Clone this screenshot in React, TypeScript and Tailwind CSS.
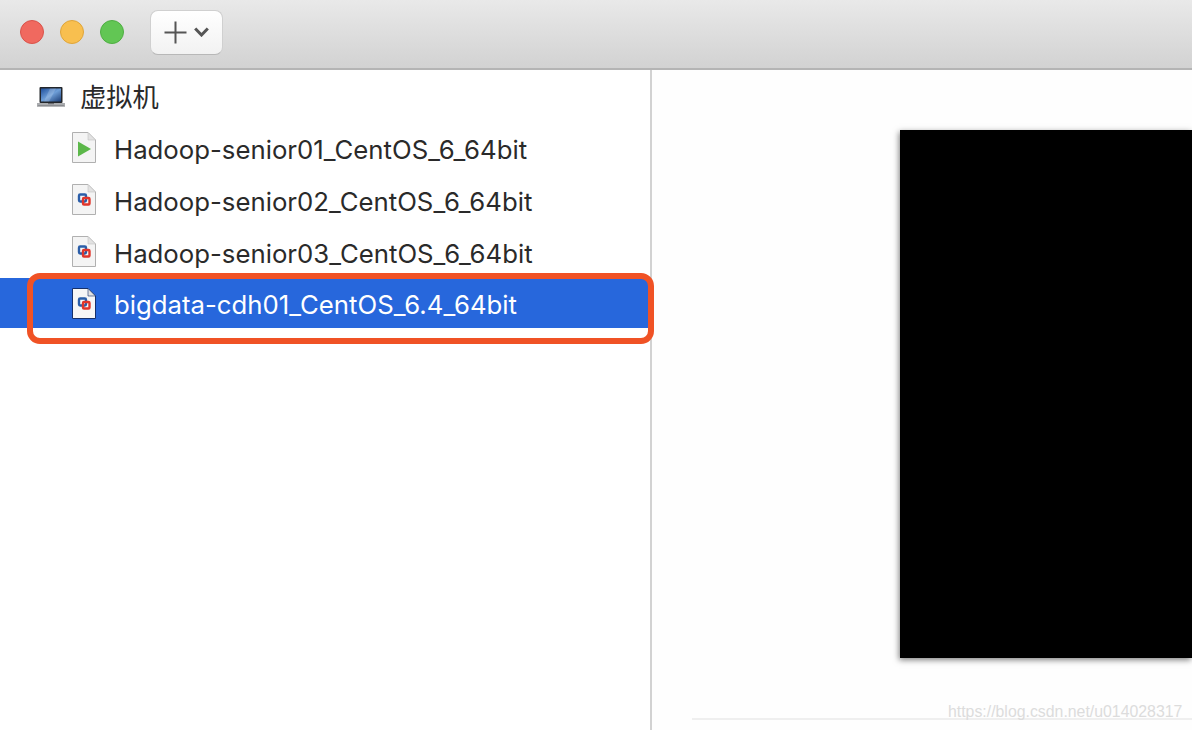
const rowText = "text-[25.75px] leading-none [font-family:Inter,'Noto_Sans_CJK_SC',sans-serif]";

function TrafficLight({ color, ring }: { color: string; ring: string }) {
  return <div className={`h-6 w-6 rounded-full border ${color} ${ring}`} />;
}

function LaptopIcon() {
  return (
    <svg width="30" height="22" viewBox="0 0 30 22" className="shrink-0">
      <defs>
        <linearGradient id="screen" x1="0" y1="0" x2="1" y2="1">
          <stop offset="0" stopColor="#1f4f9c" />
          <stop offset="0.5" stopColor="#6f9fd8" />
          <stop offset="1" stopColor="#1d3f78" />
        </linearGradient>
      </defs>
      <rect x="3.5" y="1" width="23" height="16" rx="1" fill="#23262b" />
      <rect x="5" y="2.5" width="20" height="13" fill="url(#screen)" />
      <path d="M14 2.5h6l-7 13H8z" fill="#fff" opacity="0.18" />
      <path d="M1 17h28v1.6c0 .9-.7 1.4-1.6 1.4H2.6C1.700 20 1 19.500 1 18.600z" fill="#a9abae" />
      <rect x="1" y="19.500" width="28" height="1" fill="#6f7175" />
      <rect x="12" y="17" width="6" height="1.200" fill="#6a6c70" />
    </svg>
  );
}

function DocShape({ selected }: { selected?: boolean }) {
  return (
    <>
      <path
        d="M0.500 0.500h15.500l7.500 7.500v22.500H0.500z"
        fill={selected ? "#f6f6f6" : "#f4f4f4"}
        stroke={selected ? "#16306b" : "#b0b0b0"}
        strokeWidth="1"
      />
      <path d="M16 0.500v7.500h7.500z" fill="#e2e2e2" stroke={selected ? "#16306b" : "#c4c4c4"} strokeWidth="0.600" />
    </>
  );
}

function PlayDocIcon() {
  return (
    <svg width="24" height="31" viewBox="0 0 24 31" className="mb-[3px] shrink-0">
      <DocShape />
      <path d="M6 9.500 19 17 6 24.500z" fill="#5cb84a" />
    </svg>
  );
}

function VmDocIcon({ selected }: { selected?: boolean }) {
  return (
    <svg width="24" height="31" viewBox="0 0 24 31" className={selected ? "shrink-0" : "mb-[3px] shrink-0"}>
      <DocShape selected={selected} />
      <rect x="7" y="10.500" width="7" height="7" rx="1.200" fill="none" stroke="#2a5da8" strokeWidth="2.400" />
      <rect x="11" y="14" width="6.500" height="6.500" rx="1" fill="none" stroke="#e0352b" strokeWidth="2.400" />
    </svg>
  );
}

const machines = [
  { name: "Hadoop-senior01_CentOS_6_64bit", running: true },
  { name: "Hadoop-senior02_CentOS_6_64bit", running: false },
  { name: "Hadoop-senior03_CentOS_6_64bit", running: false },
];

export default function App() {
  return (
    <div className="relative flex h-[730px] w-[1192px] flex-col overflow-hidden bg-white text-[#2a2a2a]">
      <div className="flex h-[70px] shrink-0 items-center border-b-2 border-[#b4b4b4] bg-gradient-to-b from-[#e9e9e9] to-[#d2d2d2] pb-1 pl-5">
        <div className="flex gap-4">
          <TrafficLight color="bg-[#f0695f]" ring="border-[#d9534a]" />
          <TrafficLight color="bg-[#f8bf4f]" ring="border-[#dfa53a]" />
          <TrafficLight color="bg-[#62c654]" ring="border-[#4fae43]" />
        </div>
        <div className="ml-[26px] flex h-[45px] w-[73px] items-center justify-center gap-[7px] rounded-lg border border-[#d0d0d0] border-b-[#b8b8b8] bg-gradient-to-b from-white to-[#f2f2f2]">
          <svg width="23" height="23" viewBox="0 0 23 23">
            <path d="M11.500 0.500v22M0.500 11.500h22" stroke="#555" strokeWidth="2" fill="none" />
          </svg>
          <svg width="15" height="10" viewBox="0 0 15 10">
            <path d="M1.200 1.500 7.500 8l6.300-6.500" stroke="#555" strokeWidth="3" fill="none" />
          </svg>
        </div>
      </div>

      <div className="flex min-h-0 flex-1">
        <div className="w-[650px] shrink-0 pt-px">
          <div className="flex h-[52px] items-center pl-[36px]">
            <LaptopIcon />
            <span className="mb-[1px] ml-[14px] text-[26.300px] leading-none [font-family:'Noto_Sans_CJK_SC',sans-serif]">虚拟机</span>
          </div>
          {machines.map((m) => (
            <div key={m.name} className="flex h-[52px] items-center pl-[72px]">
              {m.running ? <PlayDocIcon /> : <VmDocIcon />}
              <span className={`ml-[18px] mt-[2px] ${rowText}`}>{m.name}</span>
            </div>
          ))}
          <div className="relative -mt-px">
            <div className="flex h-[50px] items-center bg-[#2767dc] pl-[72px] text-white">
              <VmDocIcon selected />
              <span className={`ml-[18px] mt-[4px] ${rowText}`}>bigdata-cdh01_CentOS_6.4_64bit</span>
            </div>
            <div className="absolute left-[27px] top-[-5px] h-[71px] w-[627px] rounded-[13px] border-[6px] border-[#f05225]" />
          </div>
        </div>

        <div className="flex min-w-0 flex-1 flex-col border-l-2 border-[#d2d2d2] bg-[#fefefe]">
          <div className="ml-[248px] mt-[60px] h-[528px] flex-none bg-black shadow-[-1px_2px_6px_rgba(0,0,0,0.5)]" />
          <div className="ml-[40px] mt-[60px] h-[2px] bg-[#efefef]" />
        </div>
      </div>

      <div className="absolute left-[948px] top-[702px] text-[15.850px] leading-5 text-[#dcdcdc] [font-family:'Liberation_Sans',sans-serif]">
        https://blog.csdn.net/u014028317
      </div>
    </div>
  );
}
